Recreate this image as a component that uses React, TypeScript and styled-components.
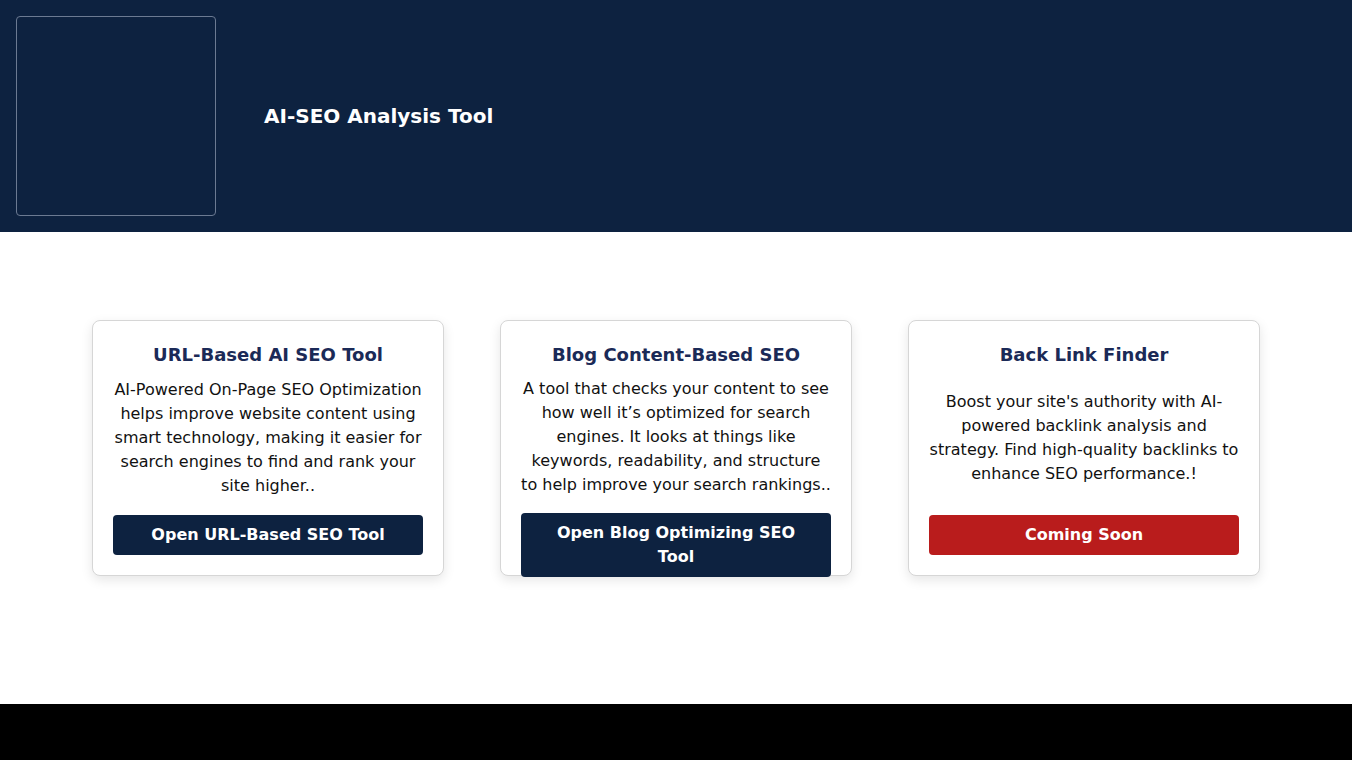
import styled, { createGlobalStyle } from "styled-components";

const GlobalStyle = createGlobalStyle`
  * {
    box-sizing: border-box;
  }
  body {
    margin: 0;
    font-family: "DejaVu Sans", sans-serif;
    background: #ffffff;
    color: #111111;
  }
`;

interface Tool {
  title: string;
  text: string;
  action: string;
  soon?: boolean;
}

const tools: Tool[] = [
  {
    title: "URL-Based AI SEO Tool",
    text: "AI-Powered On-Page SEO Optimization helps improve website content using smart technology, making it easier for search engines to find and rank your site higher..",
    action: "Open URL-Based SEO Tool",
  },
  {
    title: "Blog Content-Based SEO",
    text: "A tool that checks your content to see how well it\u2019s optimized for search engines. It looks at things like keywords, readability, and structure to help improve your search rankings..",
    action: "Open Blog Optimizing SEO Tool",
  },
  {
    title: "Back Link Finder",
    text: "Boost your site's authority with AI-powered backlink analysis and strategy. Find high-quality backlinks to enhance SEO performance.!",
    action: "Coming Soon",
    soon: true,
  },
];

export default function App() {
  return (
    <>
      <GlobalStyle />
      <Header>
        <LogoBox />
        <SiteTitle>AI-SEO Analysis Tool</SiteTitle>
      </Header>

      <Main>
        <CardRow>
          {tools.map((tool) => (
            <Card key={tool.title}>
              <CardTitle>{tool.title}</CardTitle>
              <CardText>{tool.text}</CardText>
              <ActionButton soon={tool.soon}>{tool.action}</ActionButton>
            </Card>
          ))}
        </CardRow>
      </Main>

      <Footer />
    </>
  );
}

const Header = styled.header`
  height: 232px;
  padding: 16px;
  background: #0d2240;
  display: flex;
  align-items: center;
  gap: 48px;
`;

const LogoBox = styled.div`
  width: 200px;
  height: 200px;
  flex-shrink: 0;
  border: 1px solid #6b7a92;
  border-radius: 4px;
`;

const SiteTitle = styled.h1`
  margin: 0;
  font-size: 20px;
  font-weight: bold;
  color: #ffffff;
`;

const Main = styled.main`
  height: 472px;
  padding-top: 88px;
`;

const CardRow = styled.div`
  display: flex;
  justify-content: center;
  gap: 56px;
`;

const Card = styled.div`
  width: 352px;
  height: 256px;
  padding: 20px;
  background: #ffffff;
  border: 1px solid #d6d6d6;
  border-radius: 8px;
  box-shadow: 0 4px 12px rgba(0, 0, 0, 0.1);
  display: flex;
  flex-direction: column;
  justify-content: space-between;
  text-align: center;
`;

const CardTitle = styled.h2`
  margin: 0;
  font-size: 18px;
  line-height: 28px;
  font-weight: bold;
  color: #1b2a57;
`;

const CardText = styled.p`
  margin: 8px 0 16px;
  font-size: 16px;
  line-height: 24px;
`;

const ActionButton = styled.button<{ soon?: boolean }>`
  flex-shrink: 0;
  width: 100%;
  padding: 8px 16px;
  border: none;
  border-radius: 4px;
  background: ${({ soon }) => (soon ? "#b91c1c" : "#0d2240")};
  color: #ffffff;
  font-family: "DejaVu Sans", sans-serif;
  font-size: 16px;
  line-height: 24px;
  font-weight: bold;
  cursor: pointer;
`;

const Footer = styled.footer`
  height: 56px;
  background: #000000;
`;
